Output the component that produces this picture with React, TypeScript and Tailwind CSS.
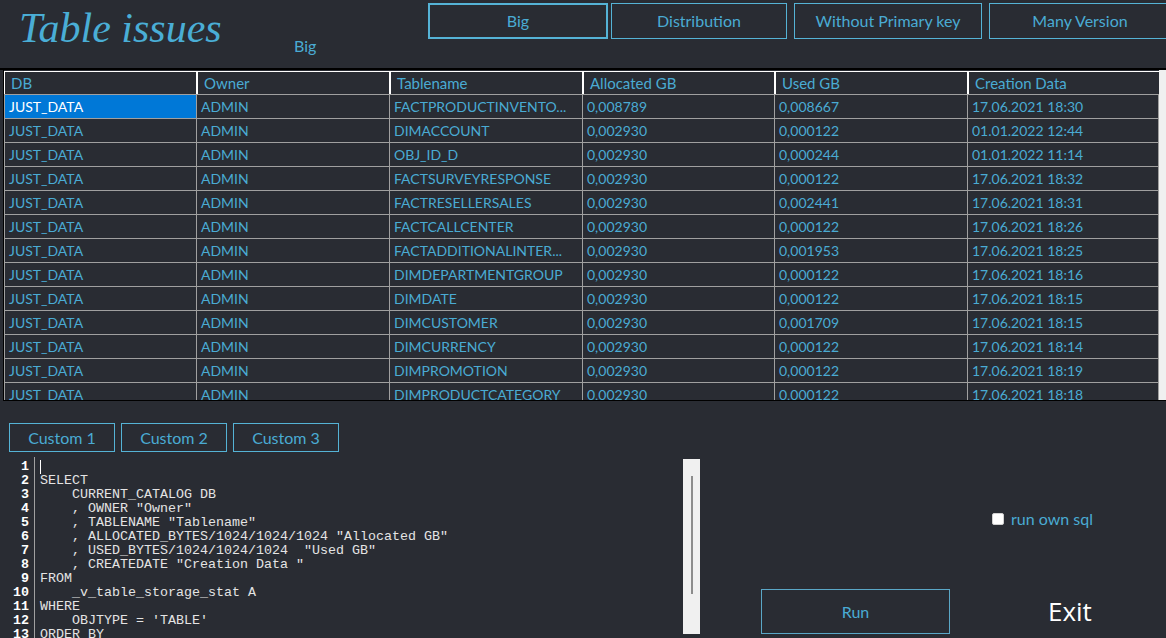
import React from "react";

const rows = [
  ["FACTPRODUCTINVENTO...", "0,008789", "0,008667", "17.06.2021 18:30"],
  ["DIMACCOUNT", "0,002930", "0,000122", "01.01.2022 12:44"],
  ["OBJ_ID_D", "0,002930", "0,000244", "01.01.2022 11:14"],
  ["FACTSURVEYRESPONSE", "0,002930", "0,000122", "17.06.2021 18:32"],
  ["FACTRESELLERSALES", "0,002930", "0,002441", "17.06.2021 18:31"],
  ["FACTCALLCENTER", "0,002930", "0,000122", "17.06.2021 18:26"],
  ["FACTADDITIONALINTER...", "0,002930", "0,001953", "17.06.2021 18:25"],
  ["DIMDEPARTMENTGROUP", "0,002930", "0,000122", "17.06.2021 18:16"],
  ["DIMDATE", "0,002930", "0,000122", "17.06.2021 18:15"],
  ["DIMCUSTOMER", "0,002930", "0,001709", "17.06.2021 18:15"],
  ["DIMCURRENCY", "0,002930", "0,000122", "17.06.2021 18:14"],
  ["DIMPROMOTION", "0,002930", "0,000122", "17.06.2021 18:19"],
  ["DIMPRODUCTCATEGORY", "0,002930", "0,000122", "17.06.2021 18:18"],
];

const headers = ["DB", "Owner", "Tablename", "Allocated GB", "Used GB", "Creation Data"];
const widths = ["w-[192px]", "w-[193px]", "w-[193px]", "w-[192px]", "w-[193px]", "w-[192px]"];

const sql = [
  "",
  "SELECT",
  "    CURRENT_CATALOG DB",
  "    , OWNER \"Owner\"",
  "    , TABLENAME \"Tablename\"",
  "    , ALLOCATED_BYTES/1024/1024/1024 \"Allocated GB\"",
  "    , USED_BYTES/1024/1024/1024  \"Used GB\"",
  "    , CREATEDATE \"Creation Data \"",
  "FROM",
  "    _v_table_storage_stat A",
  "WHERE",
  "    OBJTYPE = 'TABLE'",
  "ORDER BY",
];

const font = { fontFamily: "Lato, 'Open Sans', sans-serif" };
const mono = { fontFamily: "'Liberation Mono', monospace" };

export default function App() {
  return (
    <div
      className="flex h-[638px] w-[1166px] flex-col overflow-hidden bg-[#292c33] text-[#4aabd3]"
      style={font}
    >
      {/* header */}
      <div className="flex h-[68px] shrink-0 items-start">
        <div
          className="w-[294px] shrink-0 pl-[19px] pt-[3px] text-[42px] italic leading-[50px] text-[#4aaed6]"
          style={{ fontFamily: "'Liberation Serif', serif" }}
        >
          Table issues
        </div>
        <div className="w-[134px] shrink-0 pt-[36px] text-[16px] leading-[20px]">Big</div>
        <div className="flex shrink-0 pt-[3px] text-[16px]">
          <button className="h-[36px] w-[180px] border-2 border-[#55b3d6]">Big</button>
          <button className="ml-[3px] h-[36px] w-[176px] border border-[#55b3d6]">Distribution</button>
          <button className="ml-[7px] h-[36px] w-[188px] border border-[#55b3d6]">Without Primary key</button>
          <button className="ml-[7px] h-[36px] w-[182px] border border-[#55b3d6]">Many Version</button>
        </div>
      </div>
      <div className="h-[2px] shrink-0 bg-black" />

      {/* table */}
      <div className="h-[331px] shrink-0 pl-[3px]">
        <div className="flex h-full overflow-hidden border-b border-l border-black">
          <div className="w-[1155px] shrink-0 overflow-hidden">
            <div className="mt-[1px] flex h-[24px] border-t border-b border-t-white border-b-[#a0a0a0] text-[15px]">
              {headers.map((h, i) => (
                <div
                  key={h}
                  className={`${widths[i]} shrink-0 ${i === 0 ? "border-l" : "border-l-2"} border-white pl-[6px] leading-[22px]`}
                >
                  {h}
                </div>
              ))}
            </div>
            {rows.map((r, ri) => {
              const cells = ["JUST_DATA", "ADMIN", ...r];
              return (
                <div key={ri} className="flex h-[24px] border-b border-[#a0a0a0] text-[14px]">
                  {cells.map((c, ci) => (
                    <div
                      key={ci}
                      className={`${widths[ci]} shrink-0 overflow-hidden whitespace-nowrap border-l border-[#a0a0a0] ${ci === 5 ? "border-r" : ""} leading-[24px]`}
                    >
                      <div
                        className={
                          ri === 0 && ci === 0
                            ? "h-[23px] bg-[#0078d7] pl-[4px] text-white"
                            : "pl-[4px]"
                        }
                      >
                        {c}
                      </div>
                    </div>
                  ))}
                </div>
              );
            })}
          </div>
          <div className="flex-1 bg-[#f0f0f0]" />
        </div>
      </div>

      {/* bottom */}
      <div className="flex flex-1 flex-col">
        <div className="mt-[22px] flex gap-[6px] pl-[9px] text-[16px]">
          {["Custom 1", "Custom 2", "Custom 3"].map((c) => (
            <button key={c} className="h-[29px] w-[106px] border border-[#55b3d6]">
              {c}
            </button>
          ))}
        </div>
        <div className="mt-[5px] flex flex-1">
          <div className="flex w-[700px] shrink-0">
            <div
              className="w-[35px] shrink-0 border-r border-[#a0a0a0] pr-[5px] pt-[3px] text-right text-[13.33px] font-bold leading-[14px] text-white"
              style={mono}
            >
              {sql.map((_, i) => (
                <div key={i}>{i + 1}</div>
              ))}
            </div>
            <div
              className="flex-1 whitespace-pre pl-[5px] pt-[3px] text-[13.33px] leading-[14px] text-[#e4e4e4]"
              style={mono}
            >
              {sql.map((l, i) => (
                <div key={i} className="h-[14px]">
                  {i === 0 ? <div className="h-[14px] w-px bg-white" /> : l}
                </div>
              ))}
            </div>
            <div className="mt-[2px] h-[175px] w-[17px] shrink-0 bg-[#f0f0f0] pt-[17px]">
              <div className="ml-[8px] h-[118px] w-[2px] bg-[#8c8c8c]" />
            </div>
          </div>
          <div className="flex flex-1 flex-col pl-[61px]">
            <label className="ml-[231px] mt-[55px] flex items-center gap-[7px] text-[16px] leading-[14px]">
              <span className="h-[12px] w-[12px] rounded-[2px] border border-[#d0d0d0] bg-white" />
              run own sql
            </label>
            <div className="mt-[63px] flex items-center">
              <button className="h-[45px] w-[189px] border border-[#5aa7c7] text-[16px]">Run</button>
              <span className="ml-[98px] text-[26px] text-white" style={{ fontFamily: "'Open Sans', sans-serif" }}>
                Exit
              </span>
            </div>
          </div>
        </div>
      </div>
    </div>
  );
}
